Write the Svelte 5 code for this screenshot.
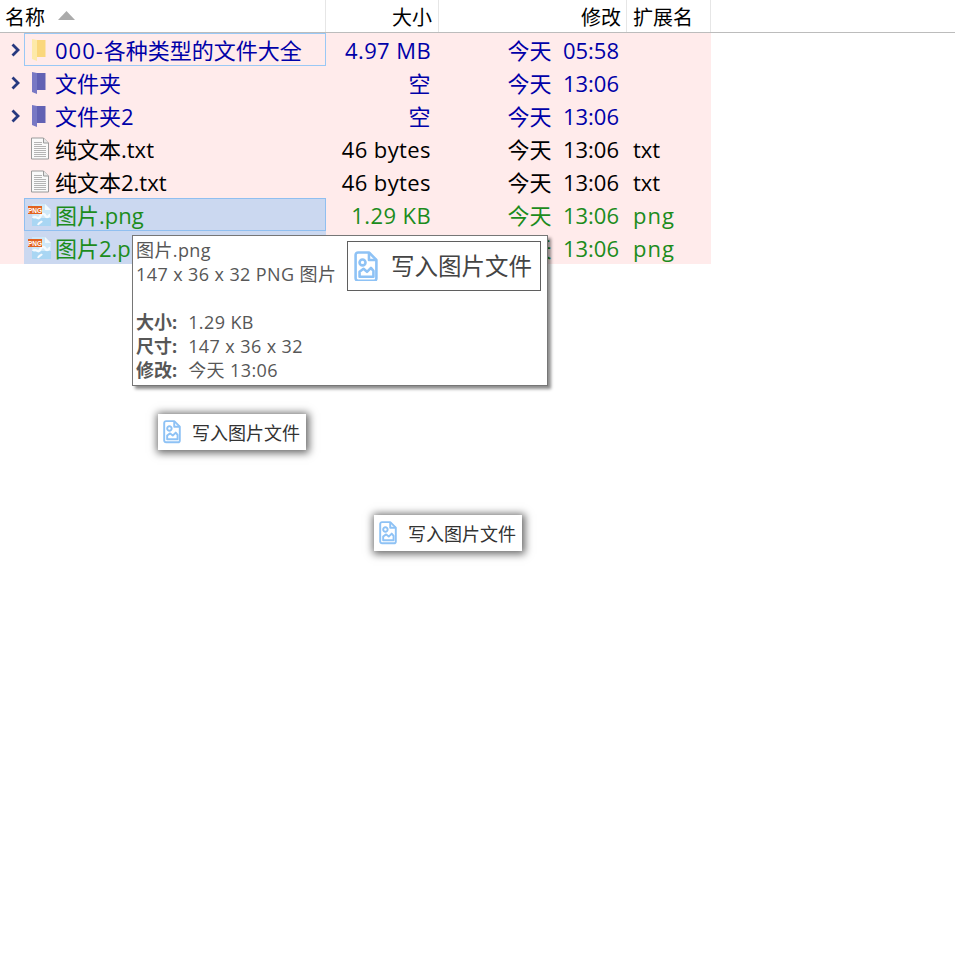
<script lang="ts">
  type Kind = 'folder' | 'dir' | 'text' | 'png';
  type Row = {
    lead?: string;
    name: string;
    size: string;
    date: string;
    ext: string;
    kind: Kind;
    tone: string;
    state?: string;
  };

  const rows: Row[] = [
    { lead: '000-', name: '各种类型的文件大全', size: '4.97 MB', date: '今天  05:58', ext: '', kind: 'folder', tone: 'blue', state: 'focus' },
    { name: '文件夹', size: '空', date: '今天  13:06', ext: '', kind: 'dir', tone: 'blue' },
    { name: '文件夹2', size: '空', date: '今天  13:06', ext: '', kind: 'dir', tone: 'blue' },
    { name: '纯文本.txt', size: '46 bytes', date: '今天  13:06', ext: 'txt', kind: 'text', tone: 'black' },
    { name: '纯文本2.txt', size: '46 bytes', date: '今天  13:06', ext: 'txt', kind: 'text', tone: 'black' },
    { name: '图片.png', size: '1.29 KB', date: '今天  13:06', ext: 'png', kind: 'png', tone: 'green', state: 'picked' },
    { name: '图片2.png', size: '1.29 KB', date: '今天  13:06', ext: 'png', kind: 'png', tone: 'green', state: 'selected' },
  ];
</script>

{#snippet writeIcon(size: number)}
  <svg class="write-icon" width={size} height={size * 1.28} viewBox="0 0 24 31" fill="none" stroke="#8ec2f5" stroke-width="2.6" stroke-linejoin="round">
    <path d="M4 1.500h11l7.500 7.500v18.500a2.500 2.500 0 0 1-2.500 2.500H4a2.500 2.500 0 0 1-2.500-2.500V4A2.500 2.500 0 0 1 4 1.500z" />
    <path d="M15 1.500V9h7.500" />
    <circle cx="8.500" cy="11.500" r="3" />
    <path d="M5.500 26v-5l4-3 3.500 3 4-4 2.500 3v6z" />
  </svg>
{/snippet}

<main>
  <div class="head">
    <div class="hcell name-head">名称<svg class="sort" width="17" height="9" viewBox="0 0 17 9"><path d="M8.500 0l8.500 9H0z" fill="#ababab" /></svg></div>
    <div class="hcell right size-head">大小</div>
    <div class="hcell right">修改</div>
    <div class="hcell">扩展名</div>
  </div>

  <div class="list">
    {#each rows as row}
      <div class="row {row.tone}">
        <div class="name">
          <span class="arrow">
            {#if row.kind === 'folder' || row.kind === 'dir'}
              <svg width="11" height="14" viewBox="0 0 11 14"><path d="M2.500 1.500L8 7l-5.500 5.500" fill="none" stroke="#27397f" stroke-width="2.800" /></svg>
            {/if}
          </span>
          <div class="label {row.state ?? ''}">
            <span class="icon">
              {#if row.kind === 'folder' || row.kind === 'dir'}
                <svg class="folder" width="14" height="22" viewBox="0 0 14 22">
                  <path d="M0 0l5 1v21l-5-2z" fill={row.kind === 'folder' ? '#fde9a8' : '#7878c4'} />
                  <path d="M5 1h8.500v17H5z" fill={row.kind === 'folder' ? '#fad77c' : '#6262b4'} />
                </svg>
              {:else if row.kind === 'text'}
                <svg width="20" height="23" viewBox="0 0 20 23">
                  <path d="M1.500 1h12l5 5v16h-17z" fill="#fafafa" stroke="#9a9a9a" />
                  <path d="M13.500 1v5h5" fill="#e8e8e8" stroke="#9a9a9a" />
                  <path d="M4 5.500h8M4 7.500h8M4 9.500h12M4 11.500h12M4 13.500h12M4 15.500h12M4 17.500h12M4 19.500h12" stroke="#b4b4b4" />
                </svg>
              {:else}
                <svg width="24" height="24" viewBox="0 0 24 24">
                  <path d="M4 1h13l6 6v16H4z" fill="#cfe8f8" />
                  <path d="M4 15h19v8H4z" fill="#a9d6f3" />
                  <path d="M17 1v6h6z" fill="#f2f9fd" />
                  <path d="M5 15c2-3 4 1 6 0s1-4 4-4 2 3 4 3 2-2 3-2" fill="none" stroke="#f4fafe" stroke-width="2.500" />
                  <path d="M10 22c1-3 3-2 4-4" fill="none" stroke="#f4fafe" stroke-width="2" />
                  <rect x="0" y="3" width="14" height="8" fill="#e2621f" />
                  <text x="7" y="9.500" class="png-tag">PNG</text>
                </svg>
              {/if}
            </span>
            <span class="text">{#if row.lead}<span class="lead">{row.lead}</span>{/if}{row.name}</span>
          </div>
        </div>
        <div class="cell right size">{row.size}</div>
        <div class="cell right date">{row.date}</div>
        <div class="cell ext">{row.ext}</div>
      </div>
    {/each}
  </div>

  <!-- 悬浮提示 -->
  <div class="tooltip">
    <div class="tip-title">图片.png</div>
    <div>147 x 36 x 32 PNG 图片</div>
    <div class="tip-gap"></div>
    <div class="tip-line"><b>大小:</b><span>1.29 KB</span></div>
    <div class="tip-line"><b>尺寸:</b><span>147 x 36 x 32</span></div>
    <div class="tip-line"><b>修改:</b><span>今天 13:06</span></div>
    <div class="preview">
      {@render writeIcon(24)}
      <span>写入图片文件</span>
    </div>
  </div>

  <!-- 拖动中的图片 -->
  <div class="chip chip-a">
    {@render writeIcon(18)}
    <span>写入图片文件</span>
  </div>
  <div class="chip chip-b">
    {@render writeIcon(18)}
    <span>写入图片文件</span>
  </div>
</main>

<style>
  :global(body) {
    margin: 0;
    background: #fff;
  }

  main {
    position: relative;
    width: 955px;
    height: 980px;
    overflow: hidden;
    font-family: "Open Sans", "Noto Sans CJK SC", sans-serif;
    font-size: 22px;
    color: #000;
  }

  .head {
    display: grid;
    grid-template-columns: 326px 113px 188px 84px 1fr;
    height: 32px;
    border-bottom: 1px solid #bcbcbc;
    font-size: 20px;
  }

  .hcell {
    display: flex;
    align-items: center;
    padding: 0 6px;
    height: 32px;
    box-sizing: border-box;
    border-right: 1px solid #e6e6e6;
    white-space: nowrap;
  }

  .hcell.right {
    justify-content: flex-end;
    padding-right: 5px;
  }

  .hcell.size-head {
    padding-right: 6px;
  }

  .name-head {
    gap: 13px;
    padding-left: 5px;
  }

  .sort {
    margin-top: -2px;
  }

  .list {
    width: 711px;
    background: #ffebeb;
  }

  .row {
    display: grid;
    grid-template-columns: 326px 113px 188px 84px;
    grid-template-rows: 33px;
    height: 33px;
    line-height: 33px;
    white-space: pre;
  }

  .blue {
    color: #0000a8;
  }

  .black {
    color: #000;
  }

  .green {
    color: #1c8c1c;
  }

  .name {
    display: flex;
    min-width: 0;
  }

  .arrow {
    flex: none;
    width: 24px;
    display: flex;
    align-items: center;
    justify-content: center;
    padding-left: 7px;
    box-sizing: border-box;
  }

  .label {
    flex: 1;
    display: flex;
    align-items: center;
    min-width: 0;
    box-sizing: border-box;
    border: 1px solid transparent;
  }

  .label.focus {
    border-color: #99c8f5;
  }

  .label.picked {
    background: #cbd8f0;
    border-color: #90bff0;
  }

  .label.selected {
    background: #cbd8f0;
    border-color: #cbd8f0;
  }

  .icon {
    flex: none;
    width: 30px;
    height: 24px;
    display: flex;
    align-items: center;
    justify-content: center;
  }

  .icon svg {
    display: block;
  }

  .icon .folder {
    margin-right: 2px;
  }

  .png-tag {
    font-family: "Liberation Sans", sans-serif;
    font-size: 6.500px;
    font-weight: 700;
    fill: #fff;
    text-anchor: middle;
  }

  .text {
    align-self: flex-start;
    overflow: hidden;
  }

  .lead {
    letter-spacing: 1px;
  }

  .cell {
    line-height: 35px;
  }

  .cell.right {
    text-align: right;
  }

  .size {
    padding-right: 8px;
    box-sizing: border-box;
    letter-spacing: 0.4px;
  }

  .date {
    padding-right: 8px;
    box-sizing: border-box;
  }

  .ext {
    padding-left: 6px;
    box-sizing: border-box;
  }

  .green .ext {
    letter-spacing: 1px;
  }

  .tooltip {
    position: absolute;
    left: 132px;
    top: 235px;
    width: 416px;
    height: 151px;
    box-sizing: border-box;
    padding: 2px 3px;
    background: #fff;
    border: 1px solid #767676;
    box-shadow: 3px 3px 3px rgba(0, 0, 0, 0.45);
    color: #575757;
    font-size: 18px;
    line-height: 24px;
    letter-spacing: 0.4px;
    white-space: nowrap;
  }

  .tip-gap {
    height: 24px;
  }

  .tip-line {
    display: flex;
    gap: 11px;
  }

  .tip-line b {
    font-weight: 700;
    letter-spacing: 0;
  }

  .preview {
    position: absolute;
    left: 214px;
    top: 5px;
    width: 194px;
    height: 50px;
    box-sizing: border-box;
    border: 1px solid #5f5f5f;
    display: flex;
    align-items: center;
    gap: 13px;
    padding-left: 6px;
    background: #fff;
    font-size: 23.500px;
    letter-spacing: 0;
    color: #444;
  }

  .write-icon {
    flex: none;
    display: block;
  }

  .chip {
    position: absolute;
    width: 148px;
    height: 36px;
    display: flex;
    align-items: center;
    gap: 11px;
    padding-left: 5px;
    box-sizing: border-box;
    background: #fff;
    box-shadow: 1px 1px 8px 2px rgba(0, 0, 0, 0.6);
    font-size: 18px;
    color: #333;
  }

  .chip-a {
    left: 158px;
    top: 414px;
  }

  .chip-b {
    left: 374px;
    top: 515px;
  }
</style>
